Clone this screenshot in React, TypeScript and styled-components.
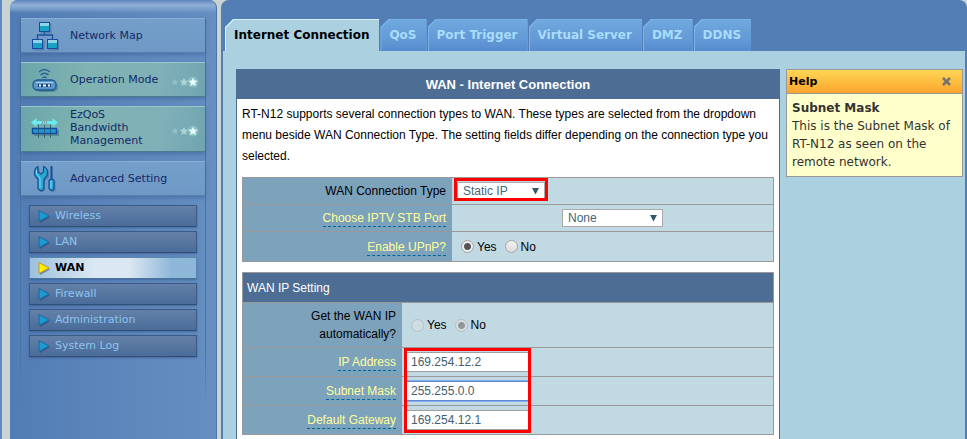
import React, { useState } from "react";
import styled, { createGlobalStyle, css } from "styled-components";

const verdana = `Verdana, "DejaVu Sans", sans-serif`;
const arial = `"Liberation Sans", Arial, sans-serif`;

const GlobalStyle = createGlobalStyle`
  *, *::before, *::after { box-sizing: border-box; }
  body {
    margin: 0;
    background: #c9d3d3;
    font-family: ${arial};
    font-size: 12px;
    color: #000;
  }
`;

const Page = styled.div`
  display: flex;
  min-height: 100vh;
  border-left: 2px solid #5b8ac4;
  padding-left: 8px;
  gap: 4px;
`;

/* ---------- sidebar ---------- */

const Sidebar = styled.nav`
  flex: 0 0 207px;
  min-width: 0;
  padding: 18px 10px 32px;
  border-radius: 8px 8px 0 0;
  background:
    linear-gradient(180deg, #5c87bd 0, #8fafd6 5px, #7fa3cf 8px, rgba(92, 134, 188, 0) 13px),
    linear-gradient(90deg, #517cb4 0%, #5f89bd 60%, #658fc1 100%);
  border-right: 1px solid #4a75ae;
  border-bottom: 1px solid #4a6f9f;
  font-family: ${verdana};
`;

const MenuFrame = styled.div`
  display: flex;
  flex-direction: column;
  border: solid;
  border-width: 0 1px;
  border-image: linear-gradient(180deg, #4b72a3 85%, rgba(75, 114, 163, 0)) 1;
  padding-bottom: 50px;
`;

const MenuItem = styled.a<{ $green?: boolean; $tall?: boolean }>`
  display: grid;
  grid-template-columns: 28px minmax(0, 1fr) 28px;
  column-gap: 11px;
  align-items: center;
  height: ${(p) => (p.$tall ? 46 : 35)}px;
  margin-bottom: 9px;
  padding: 0 6px 0 10px;
  background: ${(p) =>
    p.$green
      ? "linear-gradient(100deg, #6ba6aa 0%, #80b3b2 35%, #80b0b8 75%, #6fa5b0 100%)"
      : "linear-gradient(180deg, #759fca, #6f98c6)"};
  border-top: 1px solid ${(p) => (p.$green ? "#9ac6d0" : "#8bb0d8")};
  border-bottom: 1px solid ${(p) => (p.$green ? "#4b7b8d" : "#567fb0")};
  box-shadow: 0 2px 4px rgba(50, 85, 135, 0.45);
  color: #122a66;
  font-size: 11px;
  line-height: 13px;
  text-decoration: none;
  white-space: nowrap;
`;

const TallLabel = styled.span`
  padding-bottom: 4px;
`;

const SubMenu = styled.ul`
  list-style: none;
  margin: 0 8px;
  padding: 0;
  display: grid;
  gap: 4px;
`;

const SubItem = styled.a<{ $active?: boolean }>`
  display: flex;
  align-items: center;
  gap: 5px;
  height: 22px;
  padding: 0 8px 1px;
  border: 1px solid;
  border-color: #3b5a86 #3b5a86 #2f4f78;
  box-shadow: 0 1px 2px rgba(40, 70, 120, 0.5);
  background: linear-gradient(180deg, #6480a8, #4a6c99);
  color: #8cc4f0;
  font-size: 11px;
  text-decoration: none;
  ${(p) =>
    p.$active &&
    css`
      background: linear-gradient(90deg, #9cc0de 0%, #dbe7f2 38%, #dbe7f2 60%, #8db6d8 86%, #8db6d8 100%);
      border-color: #5d86ad #5d86ad #47739c;
      color: #000;
      font-weight: bold;
    `}
`;

/* ---------- main panel ---------- */

const Main = styled.main`
  flex: 1;
  min-width: 0;
  display: flex;
  flex-direction: column;
  padding: 19px 2px 0;
  background: #537eb5;
  border-radius: 8px 8px 0 0;
`;

const Tabs = styled.nav`
  display: flex;
  gap: 1px;
  padding-left: 2px;
  font-family: ${verdana};
`;

const Tab = styled.a<{ $active?: boolean }>`
  position: relative;
  isolation: isolate;
  height: 32px;
  padding: 0 10px 0 9px;
  line-height: 33px;
  font-size: 12px;
  font-weight: bold;
  white-space: nowrap;
  text-decoration: none;
  color: ${(p) => (p.$active ? "#000" : "#a9dcfb")};
  background: ${(p) => (p.$active ? "#d3f0f8" : "#78b4ea")};
  clip-path: polygon(8px 0, 100% 0, 100% 100%, 0 100%, 0 8px);

  &::before {
    content: "";
    position: absolute;
    inset: 1px 0 0 1px;
    z-index: -1;
    clip-path: polygon(8px 0, 100% 0, 100% 100%, 0 100%, 0 8px);
    background: ${(p) => (p.$active ? "#abd1e0" : "linear-gradient(180deg, #6fa8de, #649ad6 60%, #568ccf)")};
  }
`;

const Content = styled.div`
  flex: 1;
  display: flex;
  align-items: flex-start;
  gap: 6px;
  padding: 18px 2px 0 13px;
  background: #abd1e0;
`;

const Form = styled.form`
  flex: 1;
  min-width: 0;
  align-self: stretch;
  background: #fff;
  border: solid #4d6d94;
  border-width: 0 1px;
`;

const FormTitle = styled.h1`
  margin: 0;
  height: 30px;
  line-height: 31px;
  background: #4d6d94;
  color: #fff;
  font-size: 13px;
  font-weight: bold;
  text-align: center;
`;

const FormBody = styled.div`
  display: grid;
  gap: 10px;
  padding: 5px 5px 4px;
`;

const Intro = styled.p`
  margin: 0;
  line-height: 21px;
`;

const Table = styled.table`
  width: 100%;
  border-collapse: collapse;
  table-layout: fixed;

  th,
  td {
    border: 1px solid #999;
    padding: 0 5px;
    font-weight: normal;
    line-height: 18px;
  }
  th {
    background: #7ca2bc;
    text-align: right;
  }
  td {
    background: #c1d9e3;
    padding: 0 1px;
  }
`;

const LabelColumn = styled.col<{ $width: number }>`
  width: ${(p) => p.$width}px;
`;

const SectionHead = styled.thead`
  && th {
    height: 30px;
    padding: 0 4px;
    background: #4d6d94;
    color: #fff;
    text-align: left;
  }
`;

const Row = styled.tr<{ $height: number }>`
  height: ${(p) => p.$height}px;
`;

const HintLink = styled.a`
  display: inline-block;
  line-height: 16px;
  color: #ffff99;
  text-decoration: none;
  border-bottom: 1px dashed #006699;
`;

const Cell = styled.div<{ $center?: boolean }>`
  position: relative;
  display: flex;
  align-items: center;
  justify-content: ${(p) => (p.$center ? "center" : "flex-start")};
`;

const Highlight = styled.span<{ $width: number; $height: number }>`
  position: absolute;
  z-index: 1;
  top: -4px;
  left: 1px;
  width: ${(p) => p.$width}px;
  height: ${(p) => p.$height}px;
  border: 3px solid #f00;
  pointer-events: none;
`;

const SelectBox = styled.span<{ $width: number; $inset?: boolean }>`
  position: relative;
  display: flex;
  width: ${(p) => p.$width}px;
  margin-left: ${(p) => (p.$inset ? 4 : 0)}px;

  select {
    appearance: none;
    width: 100%;
    height: 18px;
    margin: 0;
    padding: 0 5px;
    border: 1px solid #a9a9a9;
    border-radius: 0;
    background: #fff;
    color: #44677a;
    font: 12px ${arial};
  }
  svg {
    position: absolute;
    right: 6px;
    top: 6px;
    pointer-events: none;
  }
`;

const RadioGroup = styled.div`
  display: flex;
  gap: 8px;
  padding-left: 8px;
`;

const RadioLabel = styled.label`
  display: flex;
  align-items: center;
  gap: 3px;
`;

const Radio = styled.input`
  appearance: none;
  width: 13px;
  height: 13px;
  margin: 0;
  border: 1px solid #a6a6a6;
  border-radius: 50%;
  background: linear-gradient(180deg, #f2f2f2, #dcdcdc);

  &:checked {
    background: radial-gradient(circle, #555 0 3px, #ececec 4px);
  }
  &:disabled {
    border-color: #b5bfc4;
    background: #cfdce2;
  }
  &:disabled:checked {
    background: radial-gradient(circle, #929799 0 3px, #d5dfe3 4px);
  }
`;

const TextInput = styled.input<{ $focused?: boolean }>`
  width: 123px;
  height: 20px;
  margin-left: 3px;
  padding: 0 4px;
  border: 1px solid ${(p) => (p.$focused ? "#5d86cc" : "#a0a0a0")};
  box-shadow: ${(p) => (p.$focused ? "0 0 0 1px #86b0ee" : "none")};
  background: #fff;
  color: #44606f;
  font: 12px ${arial};
  outline: none;
`;

/* ---------- help box ---------- */

const Help = styled.aside`
  flex: 0 0 177px;
  border: 1px solid #999;
  background: #ffffcc;
  font-family: ${verdana};
  font-size: 12px;
  color: #333;
`;

const HelpHead = styled.header`
  display: flex;
  align-items: center;
  justify-content: space-between;
  height: 24px;
  padding: 0 11px 0 2px;
  border-bottom: 1px solid #999;
  background: linear-gradient(180deg, #ffd654, #fba42c);
  color: #000;
  font-size: 11px;
  font-weight: bold;
`;

const CloseButton = styled.button`
  display: flex;
  padding: 0;
  border: 0;
  background: none;
  cursor: pointer;
`;

const HelpBody = styled.div`
  padding: 5px 4px 5px 5px;
  line-height: 18px;
`;

/* ---------- drawings ---------- */

const NetworkIcon = () => (
  <svg width="28" height="30" viewBox="0 0 28 30" aria-hidden="true">
    <path d="M13.500 11v3M6.500 18v-4h15v4" fill="none" stroke="#1d4f9c" strokeWidth="1.300" />
    {[[8.5, 1.5], [1.5, 18.5], [16.5, 18.5]].map(([x, y]) => (
      <g key={`${x}-${y}`}>
        <rect x={x + 1} y={y + 1} width="11" height="10" fill="#41689a" opacity=".5" />
        <rect x={x} y={y} width="10" height="9" fill="#18a1c5" stroke="#174a9a" />
        <rect x={x + 0.5} y={y + 0.5} width="9" height="3" fill="#8fd4e6" />
      </g>
    ))}
  </svg>
);

const RouterIcon = () => (
  <svg width="28" height="28" viewBox="0 0 28 28" aria-hidden="true">
    <path d="M8 6q5.500-5 11 0M9.500 9q4-3.500 8 0M11.500 12q2-2 4 0" fill="none" stroke="#2a6298" strokeWidth="1.300" />
    <rect x="4" y="16" width="23" height="10" rx="5" fill="#38627f" opacity=".5" />
    <rect x="2" y="14" width="23" height="10" rx="4.500" fill="#5b98c8" stroke="#1f568f" strokeWidth="1.300" />
    <path d="M5 16.500h17" stroke="#a8d3e8" />
    <rect x="7" y="18" width="13" height="3" fill="#164487" />
    <path d="M8 19.500h2M12 19.500h3M17 19.500h2" stroke="#fff" strokeWidth="2" />
  </svg>
);

const BandwidthIcon = () => (
  <svg width="28" height="28" viewBox="0 0 28 28" aria-hidden="true">
    <path d="M0 7.500L5.500 3v3H11v3H5.500v3zM27 7.500L21.500 3v3H16v3h5.500v3z" fill="#66ecf1" />
    <path d="M12 7.500h1M14 7.500h1" stroke="#66ecf1" strokeWidth="3" />
    <rect x="3" y="15" width="25" height="6" fill="#3c6a80" opacity=".5" />
    <rect x="1.500" y="13.500" width="24" height="5" fill="#2196d6" stroke="#124b9c" strokeWidth="1.400" />
    <path d="M7.500 10v13M13.500 10v13M19.500 10v13" stroke="#31566e" strokeWidth=".8" />
  </svg>
);

const ToolsIcon = () => (
  <svg width="28" height="30" viewBox="0 0 28 30" aria-hidden="true">
    <g transform="translate(1.500 1.500)" fill="#3e6798" opacity=".5">
      <path d="M7 3v5l3 2 2.500-2V3l4 3v6l-4 3.500v9q-2.500 4.500-5 0v-9L3.500 12V6z" />
      <path d="M18 16h5v9q-2.500 4-5 0z" />
    </g>
    <path
      d="M7 2.500v5.500l3 2 2.500-2V2.500Q16.500 4 16.500 8.500q0 4-3.500 6.500v9.500q-3 4.500-6 0V15q-3.500-2.500-3.500-6.500Q3.500 4 7 2.500z"
      fill="#28a9d2"
      stroke="#174f96"
      strokeWidth="1.300"
      strokeLinejoin="round"
    />
    <path d="M5.500 6v4l3.500 4v10" fill="none" stroke="#86dcee" />
    <path d="M20.500 2v13" stroke="#174f96" strokeWidth="2" />
    <path d="M18 16.500q2.500-3 5 0v8q-2.500 4-5 0z" fill="#28a9d2" stroke="#174f96" strokeWidth="1.300" />
    <path d="M20 17v7" stroke="#86dcee" />
  </svg>
);

const starPath = "M0-4.500l1.300 3 3.200.3-2.400 2.200.8 3.300L0 2.600l-2.900 1.700.8-3.300-2.400-2.200 3.200-.3z";

const Stars = () => (
  <svg width="28" height="16" viewBox="0 0 28 16" aria-hidden="true">
    <path d={starPath} transform="translate(4 10) scale(.8)" fill="#d7f5f3" opacity=".25" />
    <path d={starPath} transform="translate(13 10) scale(.95)" fill="#d7f5f3" opacity=".55" />
    <circle cx="22" cy="10" r="5.500" fill="#c8f4f2" opacity=".25" />
    <path d={starPath} transform="translate(22 10)" fill="#e6fffc" />
  </svg>
);

const Arrow = ({ active }: { active?: boolean }) => (
  <svg width="12" height="14" viewBox="0 0 12 14" aria-hidden="true">
    <path d="M2 3l10 5.500L2 14z" fill="#203f68" opacity=".45" />
    <path d="M1 1.500l10 5.500L1 12.500z" fill={active ? "#ffef00" : "#1b9bce"} stroke={active ? "#c99a10" : "#1769a8"} />
  </svg>
);

const DropMark = () => (
  <svg width="7" height="7" viewBox="0 0 7 7" aria-hidden="true">
    <path d="M0 0h7L3.500 6.500z" fill="#33586b" />
  </svg>
);

/* ---------- page ---------- */

const subItems = ["Wireless", "LAN", "WAN", "Firewall", "Administration", "System Log"];
const tabs = ["Internet Connection", "QoS", "Port Trigger", "Virtual Server", "DMZ", "DDNS"];

const YesNo = ({ name, initial, disabled, label }: { name: string; initial: string; disabled?: boolean; label: string }) => {
  const [value, setValue] = useState(initial);
  return (
    <RadioGroup role="radiogroup" aria-labelledby={label}>
      {["Yes", "No"].map((option) => (
        <RadioLabel key={option}>
          <Radio
            type="radio"
            name={name}
            value={option}
            checked={value === option}
            disabled={disabled}
            onChange={() => setValue(option)}
          />
          {option}
        </RadioLabel>
      ))}
    </RadioGroup>
  );
};

const addresses = [
  { id: "ip", label: "IP Address", value: "169.254.12.2" },
  { id: "mask", label: "Subnet Mask", value: "255.255.0.0" },
  { id: "gateway", label: "Default Gateway", value: "169.254.12.1" },
];

export default function App() {
  return (
    <>
      <GlobalStyle />
      <Page>
        <Sidebar>
          <MenuFrame>
            <MenuItem href="#map">
              <NetworkIcon />
              Network Map
            </MenuItem>
            <MenuItem href="#mode" $green>
              <RouterIcon />
              Operation Mode
              <Stars />
            </MenuItem>
            <MenuItem href="#ezqos" $green $tall>
              <BandwidthIcon />
              <TallLabel>
                EzQoS
                <br />
                Bandwidth
                <br />
                Management
              </TallLabel>
              <Stars />
            </MenuItem>
            <MenuItem href="#advanced">
              <ToolsIcon />
              Advanced Setting
            </MenuItem>
            <SubMenu>
              {subItems.map((item) => (
                <li key={item}>
                  <SubItem href={`#${item}`} $active={item === "WAN"}>
                    <Arrow active={item === "WAN"} />
                    {item}
                  </SubItem>
                </li>
              ))}
            </SubMenu>
          </MenuFrame>
        </Sidebar>

        <Main>
          <Tabs>
            {tabs.map((tab, i) => (
              <Tab key={tab} href={`#${tab}`} $active={i === 0}>
                {tab}
              </Tab>
            ))}
          </Tabs>
          <Content>
            <Form>
              <FormTitle>WAN - Internet Connection</FormTitle>
              <FormBody>
                <Intro>
                  RT-N12 supports several connection types to WAN. These types are selected from the dropdown menu
                  beside WAN Connection Type. The setting fields differ depending on the connection type you selected.
                </Intro>
                <Table>
                  <colgroup>
                    <LabelColumn $width={209} />
                    <col />
                  </colgroup>
                  <tbody>
                    <Row $height={27}>
                      <th scope="row">
                        <label htmlFor="wan-type">WAN Connection Type</label>
                      </th>
                      <td>
                        <Cell>
                          <SelectBox $width={88} $inset>
                            <select id="wan-type" defaultValue="Static IP">
                              <option>Static IP</option>
                              <option>Automatic IP</option>
                              <option>PPPoE</option>
                            </select>
                            <DropMark />
                          </SelectBox>
                          <Highlight $width={94} $height={23} />
                        </Cell>
                      </td>
                    </Row>
                    <Row $height={27}>
                      <th scope="row">
                        <HintLink href="#iptv" id="iptv-label">Choose IPTV STB Port</HintLink>
                      </th>
                      <td>
                        <Cell $center>
                          <SelectBox $width={101}>
                            <select aria-labelledby="iptv-label" defaultValue="None">
                              <option>None</option>
                              <option>LAN1</option>
                            </select>
                            <DropMark />
                          </SelectBox>
                        </Cell>
                      </td>
                    </Row>
                    <Row $height={30}>
                      <th scope="row">
                        <HintLink href="#upnp" id="upnp-label">Enable UPnP?</HintLink>
                      </th>
                      <td>
                        <YesNo name="upnp" initial="Yes" label="upnp-label" />
                      </td>
                    </Row>
                  </tbody>
                </Table>

                <Table>
                  <colgroup>
                    <LabelColumn $width={159} />
                    <col />
                  </colgroup>
                  <SectionHead>
                    <tr>
                      <th colSpan={2}>WAN IP Setting</th>
                    </tr>
                  </SectionHead>
                  <tbody>
                    <Row $height={45}>
                      <th scope="row" id="auto-label">
                        Get the WAN IP
                        <br />
                        automatically?
                      </th>
                      <td>
                        <YesNo name="auto" initial="No" disabled label="auto-label" />
                      </td>
                    </Row>
                    {addresses.map((field, i) => (
                      <Row key={field.id} $height={29}>
                        <th scope="row">
                          <HintLink href={`#${field.id}`} id={`${field.id}-label`}>{field.label}</HintLink>
                        </th>
                        <td>
                          <Cell>
                            <TextInput
                              aria-labelledby={`${field.id}-label`}
                              defaultValue={field.value}
                              $focused={field.id === "mask"}
                            />
                            {i === 0 && <Highlight $width={127} $height={85} />}
                          </Cell>
                        </td>
                      </Row>
                    ))}
                  </tbody>
                </Table>
              </FormBody>
            </Form>

            <Help>
              <HelpHead>
                Help
                <CloseButton type="button" aria-label="Close help">
                  <svg width="9" height="9" viewBox="0 0 9 9" aria-hidden="true">
                    <path d="M1 1l7 7M8 1L1 8" stroke="#737373" strokeWidth="2.500" />
                  </svg>
                </CloseButton>
              </HelpHead>
              <HelpBody>
                <strong>Subnet Mask</strong>
                <br />
                This is the Subnet Mask of RT-N12 as seen on the remote network.
              </HelpBody>
            </Help>
          </Content>
        </Main>
      </Page>
    </>
  );
}
